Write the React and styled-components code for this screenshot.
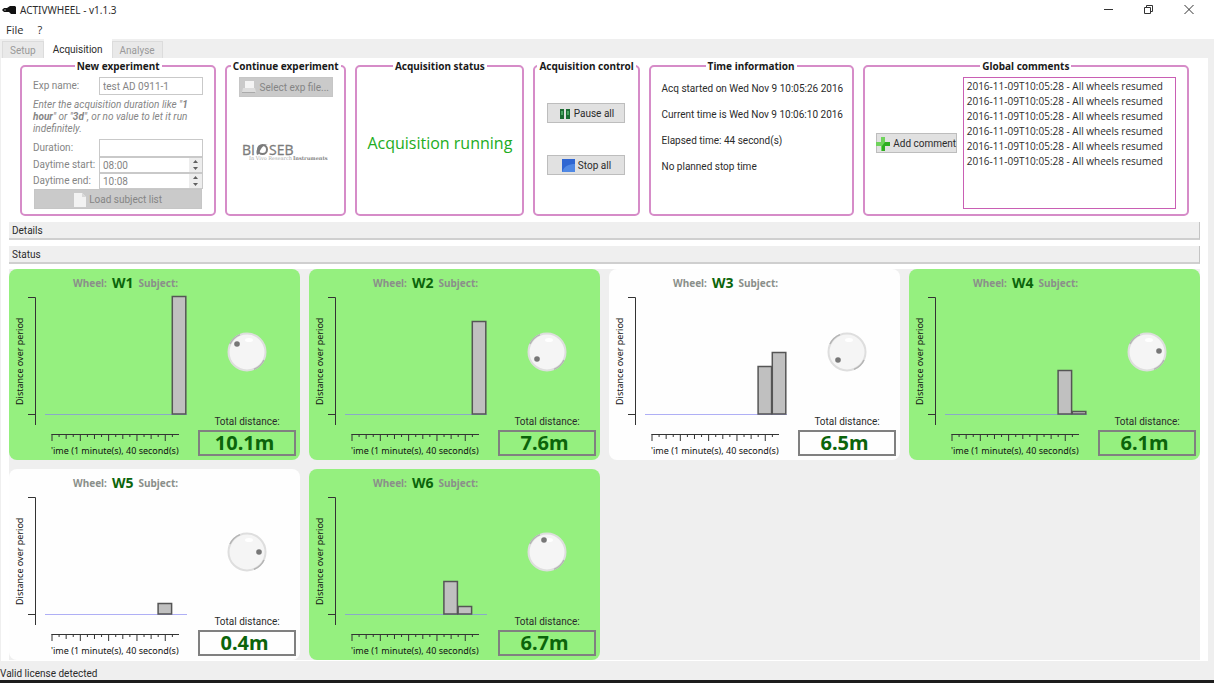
import styled, { createGlobalStyle } from "styled-components";
import { useState } from "react";

const GlobalStyle = createGlobalStyle`
    * {
        box-sizing: border-box;
    }
    body {
        margin: 0;
        background-color: #efefef;
        color: #2b2b2b;
        font-family: Roboto, "Noto Sans", sans-serif;
        font-size: 10px;
        line-height: 12px;
    }
    button, input {
        font: inherit;
        color: inherit;
    }
    svg {
        flex-shrink: 0;
    }
`
const StyledWindow = styled.div`
    display: flex;
    flex-direction: column;
    min-height: 100vh;
    border-bottom: 3px solid #1c1c1c;
`
const StyledTitleBar = styled.header`
    display: flex;
    align-items: center;
    gap: 4px;
    height: 20px;
    padding: 0px 18px 0px 2px;
    background-color: white;
`
const StyledAppName = styled.h1`
    flex: 1;
    margin: 0;
    font-family: "Noto Sans", sans-serif;
    font-size: 10px;
    font-weight: 400;
`
const StyledWindowButtons = styled.div`
    display: flex;
    gap: 26px;
`
const StyledWindowButton = styled.button`
    display: flex;
    padding: 0;
    border: none;
    background: none;
`
const StyledMenu = styled.nav`
    display: flex;
    align-items: center;
    gap: 14px;
    height: 19px;
    padding: 0px 6px;
    background-color: white;
`
const StyledMenuButton = styled.button`
    padding: 0;
    border: none;
    background: none;
    font-family: "Open Sans", sans-serif;
    font-size: 11px;
`
const StyledTabs = styled.div`
    display: flex;
    align-items: flex-end;
    height: 19px;
    padding-left: 2px;
`
const StyledTab = styled.button`
    height: ${(props) => (props.$active ? "19px" : "17px")};
    padding: 1px ${(props) => (props.$active ? "8px" : "7px")} 0px;
    border: 1px solid ${(props) => (props.$active ? "#ffffff" : "#dcdcdc")};
    border-bottom: none;
    background-color: ${(props) => (props.$active ? "#ffffff" : "#e9e9e9")};
    color: ${(props) => (props.$active ? "#2b2b2b" : "#999999")};
`
const StyledPanel = styled.main`
    flex: 1;
    margin: 0px 6px 0px 1px;
    padding: 1px 8px 1px 8px;
    background-color: white;
`
const StyledGroups = styled.div`
    display: grid;
    grid-template-columns: 196fr 121fr 169fr 106fr 205fr 326fr;
    gap: 9px;
    padding: 0px 11px;
`
const StyledGroup = styled.fieldset`
    min-width: 0;
    margin: 0;
    padding: 4px ${(props) => (props.$narrow ? "2px" : "11px")} 5px;
    border: 2px solid #d68cc8;
    border-radius: 5px;
`
const StyledLegend = styled.legend`
    margin: 0 auto;
    padding: 0px 2px;
    font-family: "Noto Sans", sans-serif;
    line-height: 14px;
    font-weight: 700;
    white-space: nowrap;
    color: #1a1a1a;
`
const StyledColumn = styled.div`
    display: flex;
    flex-direction: column;
    align-items: center;
    justify-content: ${(props) => props.$justify || "flex-start"};
    gap: ${(props) => props.$gap || "0px"};
    height: 100%;
    padding-bottom: ${(props) => props.$bottom || "0px"};
`
const StyledForm = styled.form`
    display: grid;
    grid-template-columns: 66px minmax(0, 1fr);
    align-items: center;
    white-space: nowrap;
    color: #858585;
`
const StyledInput = styled.input`
    width: 100%;
    min-width: 0;
    height: 18px;
    padding: 1px 3px 0px;
    border: 1px solid #c9c9c9;
    background-color: white;
    outline: none;
`
const StyledHint = styled.p`
    grid-column: 1 / -1;
    margin: 4px 0px 4px 0px;
    font-style: italic;
`
const StyledSpin = styled.div`
    display: flex;
    height: 16px;
    border: 1px solid #c9c9c9;
`
const StyledSpinInput = styled.input`
    flex: 1;
    min-width: 0;
    padding: 1px 3px 0px;
    border: none;
    background-color: white;
`
const StyledSpinButtons = styled.div`
    display: flex;
    flex-direction: column;
    width: 13px;
    background-color: #ededed;
`
const StyledSpinButton = styled.button`
    display: flex;
    flex: 1;
    align-items: center;
    justify-content: center;
    padding: 0;
    border: none;
    background: none;
`
const StyledButton = styled.button`
    display: flex;
    align-items: center;
    justify-content: center;
    gap: 3px;
    width: ${(props) => props.$width || "auto"};
    height: 20px;
    padding: 1px 0px 0px;
    border: 1px solid #bdbdbd;
    background-color: #e1e1e1;
    white-space: nowrap;
    &:disabled{
        border-color: #c6c6c6;
        background-color: #cacaca;
        color: #858585;
    }
`
const StyledLoad = styled.div`
    grid-column: 1 / -1;
    padding: 0px 1px;
`
const StyledLogo = styled.div`
    display: flex;
    margin-top: 44px;
`
const StyledRunning = styled.p`
    margin: 0;
    font-family: "Open Sans", sans-serif;
    font-size: 16px;
    line-height: 24px;
    white-space: nowrap;
    color: #22ac22;
`
const StyledTimes = styled.div`
    display: flex;
    flex-direction: column;
    gap: 14px;
    padding-top: 6px;
    white-space: nowrap;
`
const StyledComments = styled.div`
    display: grid;
    grid-template-columns: 81px minmax(0, 1fr);
    align-items: center;
    gap: 6px;
    height: 100%;
`
const StyledList = styled.ul`
    align-self: stretch;
    margin: 0;
    padding: 1px 3px;
    border: 1px solid #c95fb4;
    list-style: none;
    font-family: "Open Sans", sans-serif;
    line-height: 15px;
    white-space: nowrap;
`
const StyledSection = styled.button`
    display: block;
    width: 100%;
    height: 18px;
    margin-top: 6px;
    padding: 2px 3px 0px;
    border: none;
    border-right: 1px solid #c4c4c4;
    border-bottom: 2px solid #cfcfcf;
    background-color: #efefef;
    text-align: left;
`
const StyledCards = styled.div`
    display: grid;
    grid-template-columns: repeat(4, 1fr);
    gap: 9px;
    margin-top: 5px;
    background-color: #efefef;
`
const StyledCard = styled.section`
    display: grid;
    grid-template-columns: 189px minmax(0, 1fr);
    border-radius: 8px;
    background-color: ${(props) => (props.$moving ? "#95f07f" : "#fefefe")};
`
const StyledCardTitle = styled.h2`
    display: flex;
    align-items: center;
    gap: 5px;
    height: 26px;
    margin: 0;
    padding: 2px 0px 0px 64px;
    font-family: "Noto Sans", sans-serif;
    font-size: 10px;
    color: #8a8f8a;
`
const StyledWheelName = styled.span`
    font-size: 14px;
    color: #0b640b;
`
const StyledChart = styled.svg`
    display: block;
    font-family: "Noto Sans", sans-serif;
    font-size: 9px;
`
const StyledSide = styled.div`
    display: flex;
    flex-direction: column;
    align-items: center;
    padding: 62px 4px 4px 0px;
`
const StyledTotalLabel = styled.div`
    margin-top: auto;
    padding-bottom: 2px;
`
const StyledTotal = styled.output`
    width: 100%;
    padding-right: 5px;
    border: 2px solid #808080;
    font-family: "Noto Sans", sans-serif;
    font-size: 20px;
    font-weight: 700;
    line-height: 22px;
    text-align: center;
    color: #0b640b;
`
const StyledStatusBar = styled.footer`
    height: 19px;
    padding-top: 7px;
`

const wheels = [
    { name: "W1", moving: true, total: "10.1m", dot: [-10, -8], bars: [[9, 118]] },
    { name: "W2", moving: true, total: "7.6m", dot: [-10, 7], bars: [[9, 93]] },
    { name: "W3", moving: false, total: "6.5m", dot: [-9, 8], bars: [[8, 48], [9, 62]] },
    { name: "W4", moving: true, total: "6.1m", dot: [12, -1], bars: [[8, 44], [9, 3]] },
    { name: "W5", moving: false, total: "0.4m", dot: [12, 0], bars: [[8, 11]] },
    { name: "W6", moving: true, total: "6.7m", dot: [-3, -12], bars: [[7, 33], [8, 8]] },
];

const comments = Array(6).fill("2016-11-09T10:05:28 - All wheels resumed");

function Arrow({ down }){
    return(
        <svg width="5" height="3" viewBox="0 0 5 3">
            <path d={down ? "M0 0h5L2.5 3z" : "M0 3h5L2.5 0z"} fill="#606060" />
        </svg>
    )
}

function Chart({ bars }){
    const ticks = Array.from({ length: 18 }, (_, i) => i);
    return(
        <StyledChart width="189" height="165" viewBox="0 26 189 165">
            <path d="M19 28.5h7.5V156M19 145.5h7" fill="none" stroke="#333" />
            <text transform="translate(14 136) rotate(-90)" fill="#111">Distance over period</text>
            <path d="M36 145.5h142" stroke="#8484f0" strokeOpacity="0.65" />
            {bars.map(([slot, height]) => (
                <rect key={slot} x={35.5 + slot * 14.2} y={145.5 - height} width="13.5" height={height - 0.5} fill="#c0c0c0" stroke="#555" strokeWidth="1.5" />
            ))}
            <path d="M42.5 165.5H170" stroke="#333" />
            {ticks.map((i) => (
                <path key={i} d={`M${43 + i * 7.08} 165v${i % 4 === 0 ? 7 : i % 2 === 0 ? 5 : 3}`} stroke="#333" />
            ))}
            <text x="42" y="185" fill="#111">'ime (1 minute(s), 40 second(s)</text>
        </StyledChart>
    )
}

function Dial({ dot, name }){
    return(
        <svg width="42" height="42" viewBox="-21 -21 42 42" role="img" aria-label={"Wheel " + name}>
            <circle r="18.5" fill="#f5f5f5" stroke="#dedede" strokeWidth="2" />
            <path d="M-17 -8A18.8 18.8 0 0 1 -7 -17.4M17 8A18.8 18.8 0 0 1 7 17.4" fill="none" stroke="#b4b4b4" strokeWidth="1.5" />
            <ellipse cx="2" cy="-12" rx="4" ry="2" fill="#ffffff" />
            <circle cx={dot[0]} cy={dot[1]} r="2.8" fill="#777777" />
        </svg>
    )
}

function WheelCard({ wheel }){
    return(
        <StyledCard $moving={wheel.moving}>
            <div>
                <StyledCardTitle>
                    <span>Wheel:</span>
                    <StyledWheelName>{wheel.name}</StyledWheelName>
                    <span>Subject:</span>
                </StyledCardTitle>
                <Chart bars={wheel.bars} />
            </div>
            <StyledSide>
                <Dial dot={wheel.dot} name={wheel.name} />
                <StyledTotalLabel>Total distance:</StyledTotalLabel>
                <StyledTotal>{wheel.total}</StyledTotal>
            </StyledSide>
        </StyledCard>
    )
}

function SpinBox({ id, value }){
    return(
        <StyledSpin>
            <StyledSpinInput id={id} type="text" defaultValue={value} disabled />
            <StyledSpinButtons>
                <StyledSpinButton type="button" aria-label="Increase" disabled><Arrow /></StyledSpinButton>
                <StyledSpinButton type="button" aria-label="Decrease" disabled><Arrow down /></StyledSpinButton>
            </StyledSpinButtons>
        </StyledSpin>
    )
}

function Logo(){
    return(
        <svg width="88" height="22" viewBox="0 0 88 22" role="img" aria-label="Bioseb">
            <text x="0" y="14" fontSize="14" fontFamily="Open Sans, sans-serif" fill="#7c7c7c" stroke="#7c7c7c" strokeWidth="0.3">BI</text>
            <ellipse cx="20.5" cy="8.5" rx="4.5" ry="4.5" fill="none" stroke="#7c7c7c" strokeWidth="2" />
            <path d="M15 14C13 8 17 3 26 3C21 4 18 8 17 13z" fill="#7c7c7c" />
            <text x="27" y="14" fontSize="14" fontFamily="Open Sans, sans-serif" fill="#7c7c7c" stroke="#7c7c7c" strokeWidth="0.3">SEB</text>
            <text x="7" y="19" fontSize="5" fontFamily="DejaVu Serif, serif" fill="#a8a8a8">In Vivo Research</text>
            <text x="51" y="19" fontSize="5" fontWeight="700" fontFamily="DejaVu Serif, serif" fill="#858585">Instruments</text>
        </svg>
    )
}

function App(){

    const [tab, setTab] = useState("Acquisition");

    return(
        <StyledWindow>
            <GlobalStyle />
            <StyledTitleBar>
                <svg width="14" height="10" viewBox="0 0 14 10">
                    <path d="M0 5L2 3H5L8 1H13L14 2V9H9L7 7H2z" fill="#111" />
                    <path d="M2 5h2" stroke="#999" />
                </svg>
                <StyledAppName>ACTIVWHEEL - v1.1.3</StyledAppName>
                <StyledWindowButtons>
                    <StyledWindowButton aria-label="Minimize">
                        <svg width="14" height="14" viewBox="0 0 14 14"><path d="M2 6.5h9" stroke="#333" /></svg>
                    </StyledWindowButton>
                    <StyledWindowButton aria-label="Restore">
                        <svg width="14" height="14" viewBox="0 0 14 14"><path d="M2.5 4.5h6v6h-6zM4.5 4.5v-2h6v6h-2" fill="none" stroke="#333" /></svg>
                    </StyledWindowButton>
                    <StyledWindowButton aria-label="Close">
                        <svg width="14" height="14" viewBox="0 0 14 14"><path d="M2.5 2l9 9M11.5 2l-9 9" stroke="#333" /></svg>
                    </StyledWindowButton>
                </StyledWindowButtons>
            </StyledTitleBar>
            <StyledMenu>
                <StyledMenuButton>File</StyledMenuButton>
                <StyledMenuButton>?</StyledMenuButton>
            </StyledMenu>
            <StyledTabs role="tablist">
                {["Setup", "Acquisition", "Analyse"].map((name) => (
                    <StyledTab key={name} role="tab" aria-selected={tab === name} $active={tab === name} onClick={() => setTab(name)}>{name}</StyledTab>
                ))}
            </StyledTabs>
            <StyledPanel>
                <StyledGroups>
                    <StyledGroup>
                        <StyledLegend>New experiment</StyledLegend>
                        <StyledForm onSubmit={(e) => e.preventDefault()}>
                            <label htmlFor="name">Exp name:</label>
                            <StyledInput id="name" type="text" defaultValue="test AD 0911-1" disabled />
                            <StyledHint>
                                Enter the acquisition duration like "<b>1</b><br />
                                <b>hour</b>" or "<b>3d</b>", or no value to let it run<br />
                                indefinitely.
                            </StyledHint>
                            <label htmlFor="duration">Duration:</label>
                            <StyledInput id="duration" type="text" disabled />
                            <label htmlFor="start">Daytime start:</label>
                            <SpinBox id="start" value="08:00" />
                            <label htmlFor="end">Daytime end:</label>
                            <SpinBox id="end" value="10:08" />
                            <StyledLoad>
                                <StyledButton type="submit" $width="100%" disabled>
                                    <svg width="12" height="14" viewBox="0 0 12 14"><path d="M0 0h8l4 4v10H0z" fill="#f2f2f2" /><path d="M8 0v4h4" fill="#d8d8d8" /></svg>
                                    Load subject list
                                </StyledButton>
                            </StyledLoad>
                        </StyledForm>
                    </StyledGroup>
                    <StyledGroup $narrow>
                        <StyledLegend>Continue experiment</StyledLegend>
                        <StyledColumn>
                            <StyledButton type="button" $width="94px" disabled>
                                <svg width="14" height="13" viewBox="0 0 14 13"><path d="M3 0h9v7H3z" fill="#f4f4f4" /><path d="M1 7h12l1 4H0z" fill="#dddddd" /><path d="M0 11.5h13" stroke="#aaaaaa" /></svg>
                                Select exp file...
                            </StyledButton>
                            <StyledLogo><Logo /></StyledLogo>
                        </StyledColumn>
                    </StyledGroup>
                    <StyledGroup>
                        <StyledLegend>Acquisition status</StyledLegend>
                        <StyledColumn $justify="center">
                            <StyledRunning>Acquisition running</StyledRunning>
                        </StyledColumn>
                    </StyledGroup>
                    <StyledGroup $narrow>
                        <StyledLegend>Acquisition control</StyledLegend>
                        <StyledColumn $justify="center" $gap="32px" $bottom="8px">
                            <StyledButton type="button" $width="78px">
                                <svg width="12" height="12" viewBox="0 0 12 12"><path d="M1 1h4v10H1zM7 1h4v10H7z" fill="#1d6b33" /><path d="M2 3h2v4H2zM8 3h2v4H8z" fill="#4da663" /></svg>
                                Pause all
                            </StyledButton>
                            <StyledButton type="button" $width="78px">
                                <svg width="13" height="13" viewBox="0 0 13 13"><path d="M0 0h13v13H0z" fill="#2f66d2" /><path d="M0 13C2 7 7 5 13 5v8z" fill="#5088e4" /></svg>
                                Stop all
                            </StyledButton>
                        </StyledColumn>
                    </StyledGroup>
                    <StyledGroup>
                        <StyledLegend>Time information</StyledLegend>
                        <StyledTimes>
                            <span>Acq started on Wed Nov 9 10:05:26 2016</span>
                            <span>Current time is Wed Nov 9 10:06:10 2016</span>
                            <span>Elapsed time: 44 second(s)</span>
                            <span>No planned stop time</span>
                        </StyledTimes>
                    </StyledGroup>
                    <StyledGroup>
                        <StyledLegend>Global comments</StyledLegend>
                        <StyledComments>
                            <StyledButton type="button">
                                <svg width="14" height="14" viewBox="0 0 14 14"><path d="M5 0h4v5h5v4H9v5H5V9H0V5h5z" fill="#6fd35c" /><path d="M9 5h5v4H9v5H6V9z" fill="#2fae22" /></svg>
                                Add comment
                            </StyledButton>
                            <StyledList>
                                {comments.map((comment, i) => <li key={i}>{comment}</li>)}
                            </StyledList>
                        </StyledComments>
                    </StyledGroup>
                </StyledGroups>
                <StyledSection type="button">Details</StyledSection>
                <StyledSection type="button">Status</StyledSection>
                <StyledCards>
                    {wheels.map((wheel) => <WheelCard key={wheel.name} wheel={wheel} />)}
                </StyledCards>
            </StyledPanel>
            <StyledStatusBar>Valid license detected</StyledStatusBar>
        </StyledWindow>
    )
}

export default App;
